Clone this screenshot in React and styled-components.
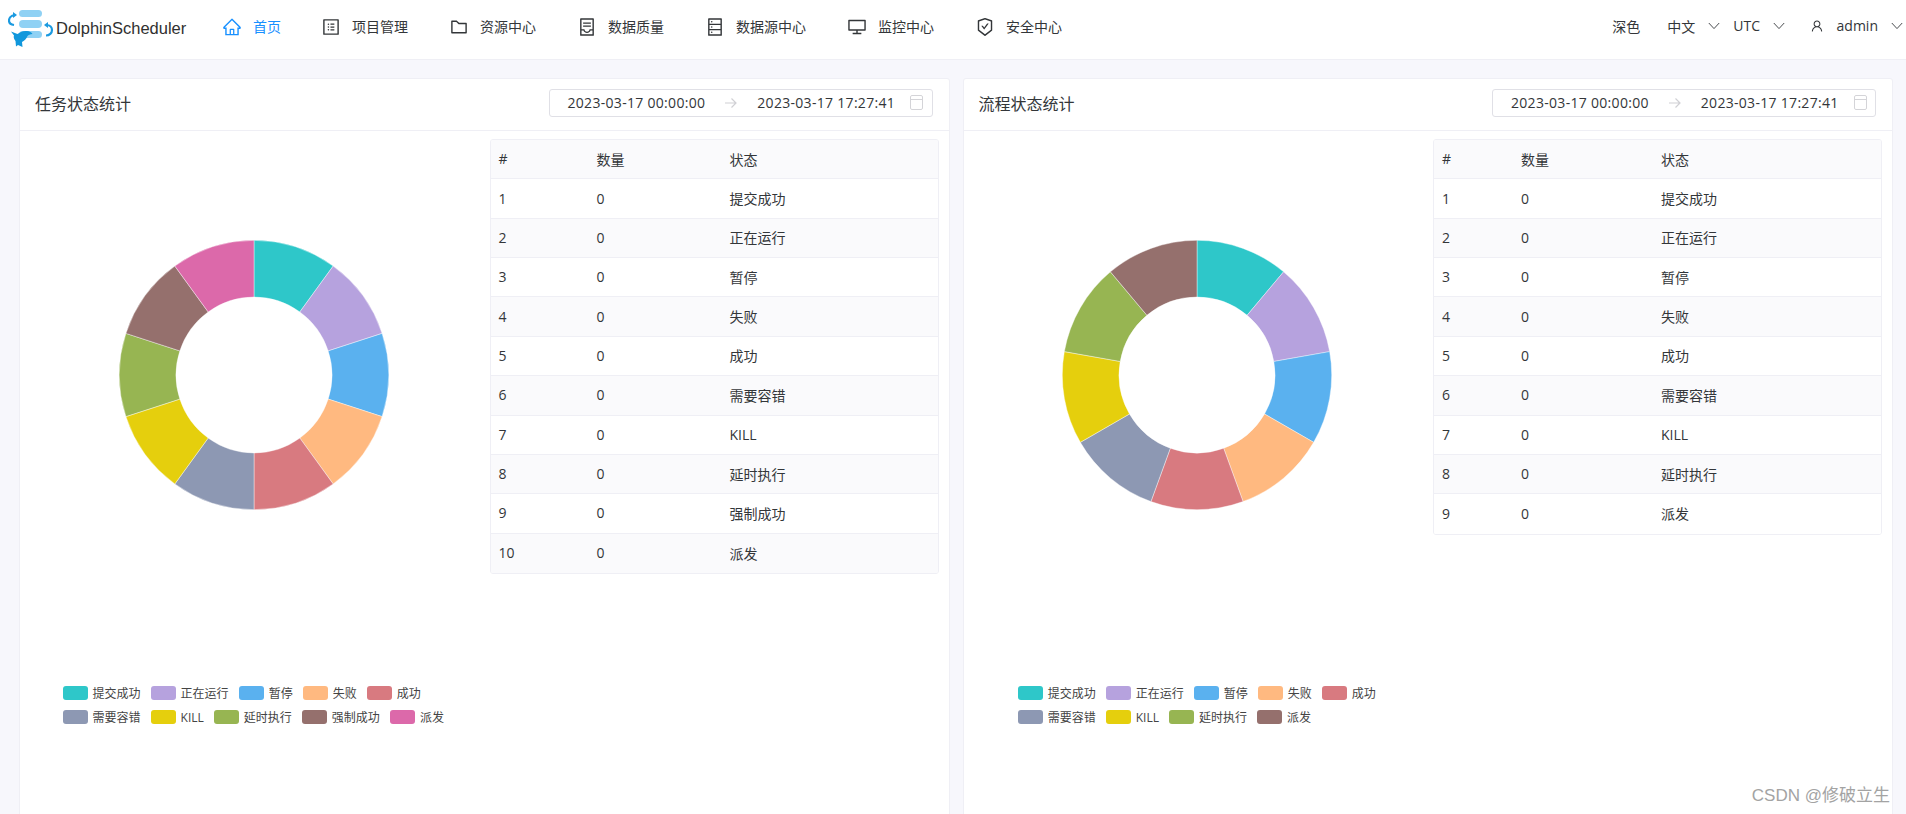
import styled, { createGlobalStyle } from "styled-components";
import {
  AiOutlineHome,
  AiOutlineProfile,
  AiOutlineFolder,
  AiOutlineContainer,
  AiOutlineDatabase,
  AiOutlineDesktop,
  AiOutlineSafetyCertificate,
  AiOutlineUser,
} from "react-icons/ai";

const FONT = `"Open Sans", "Noto Sans CJK SC", sans-serif`;

const menus = [
  { label: "首页", icon: AiOutlineHome, active: true },
  { label: "项目管理", icon: AiOutlineProfile },
  { label: "资源中心", icon: AiOutlineFolder },
  { label: "数据质量", icon: AiOutlineContainer },
  { label: "数据源中心", icon: AiOutlineDatabase },
  { label: "监控中心", icon: AiOutlineDesktop },
  { label: "安全中心", icon: AiOutlineSafetyCertificate },
];

const states = [
  { name: "提交成功", color: "#2ec7c9" },
  { name: "正在运行", color: "#b6a2de" },
  { name: "暂停", color: "#5ab1ef" },
  { name: "失败", color: "#ffb980" },
  { name: "成功", color: "#d87a80" },
  { name: "需要容错", color: "#8d98b3" },
  { name: "KILL", color: "#e5cf0d" },
  { name: "延时执行", color: "#97b552" },
  { name: "强制成功", color: "#95706d" },
  { name: "派发", color: "#dc69aa" },
];

const taskStates = states;
const processStates = states
  .filter((s) => s.name !== "强制成功")
  .map((s) => (s.name === "派发" ? { ...s, color: "#95706d" } : s));

const slicePath = (i, total, cx, cy, r, inner) => {
  const a0 = (i / total) * Math.PI * 2;
  const a1 = ((i + 1) / total) * Math.PI * 2;
  const pt = (rad, a) => `${cx + rad * Math.sin(a)} ${cy - rad * Math.cos(a)}`;
  return `M${pt(inner, a0)} L${pt(r, a0)} A${r} ${r} 0 0 1 ${pt(r, a1)} L${pt(inner, a1)} A${inner} ${inner} 0 0 0 ${pt(inner, a0)} Z`;
};

const Donut = ({ data }) => (
  <DonutSvg viewBox="0 0 270 270">
    {data.map((s, i) => (
      <path
        key={s.name}
        d={slicePath(i, data.length, 135, 135, 134.7, 78)}
        fill={s.color}
        stroke="#fff"
        strokeWidth="0.4"
      />
    ))}
  </DonutSvg>
);

const Chevron = () => (
  <ChevronSvg viewBox="0 0 12 8">
    <path d="M0.8 1 L6 6.6 L11.2 1" fill="none" stroke="#4a4d50" strokeWidth="1" />
  </ChevronSvg>
);

const CalendarIcon = () => (
  <svg width="13" height="15" viewBox="0 0 13 15">
    <rect x="0.5" y="0.5" width="12" height="14" rx="1.5" fill="none" stroke="#d4d4d8" />
    <path d="M0.5 4.5 H12.5" stroke="#d4d4d8" />
  </svg>
);

const ArrowIcon = () => (
  <svg width="12" height="12" viewBox="0 0 12 12">
    <path d="M0 6 H11 M6.5 1.5 L11 6 L6.5 10.5" fill="none" stroke="#d0d0d4" strokeWidth="1.2" />
  </svg>
);

const Logo = () => (
  <svg width="46" height="38" viewBox="0 0 46 38">
    <rect x="11" y="0" width="23" height="7" rx="3.5" fill="#8fd1f4" />
    <rect x="11" y="10" width="23" height="8" rx="4" fill="#8fd1f4" />
    <rect x="11" y="21" width="23" height="7" rx="3.5" fill="#8fd1f4" />
    <path d="M7 5 C2.5 5.5 1 8.5 1 10.5 C1 13 3 14.5 6 15" fill="none" stroke="#1b9ae0" strokeWidth="2.2" />
    <path d="M5 2 L9 5 L5 8 Z" fill="#1b9ae0" />
    <path d="M38.5 15 C42 15 44 17.5 44 20 C44 23 41.5 25.5 38 25.5" fill="none" stroke="#1b9ae0" strokeWidth="2.2" />
    <path d="M40 12 L36 15 L40 18 Z" fill="#1b9ae0" />
    <path
      d="M3 21.5 L9.5 24 C12 22.5 14.5 20.5 19 21 C21.5 21.3 23.5 22.3 24.5 24 C22 24.4 20.5 25 19.5 26 C18.5 29 16 31 14 32 L14.5 37 L10 35 L8 36.5 L7.5 31 C5.5 28.5 5.5 26.5 6 25.5 Z"
      fill="#1097dc"
    />
  </svg>
);

const StatCard = ({ title, data, cols }) => (
  <Card>
    <CardHeader>
      <CardTitle>{title}</CardTitle>
      <RangePicker>
        <DateText>2023-03-17 00:00:00</DateText>
        <ArrowIcon />
        <DateText>2023-03-17 17:27:41</DateText>
        <PickerIcon>
          <CalendarIcon />
        </PickerIcon>
      </RangePicker>
    </CardHeader>
    <CardBody>
      <ChartColumn>
        <Donut data={data} />
        <Legend>
          {[data.slice(0, 5), data.slice(5)].map((row, r) => (
            <LegendRow key={r}>
              {row.map((s) => (
                <LegendItem key={s.name}>
                  <Swatch $color={s.color} />
                  {s.name}
                </LegendItem>
              ))}
            </LegendRow>
          ))}
        </Legend>
      </ChartColumn>
      <Table>
        <Row $cols={cols} $head>
          <span>#</span>
          <span>数量</span>
          <span>状态</span>
        </Row>
        {data.map((s, i) => (
          <Row key={s.name} $cols={cols} $striped={i % 2 === 1}>
            <span>{i + 1}</span>
            <span>0</span>
            <span>{s.name}</span>
          </Row>
        ))}
      </Table>
    </CardBody>
  </Card>
);

export default function App() {
  return (
    <>
      <GlobalStyle />
      <Page>
        <Header>
          <Brand>
            <Logo />
            <BrandName>DolphinScheduler</BrandName>
          </Brand>
          <Nav>
            {menus.map((m) => (
              <NavItem key={m.label} $active={m.active}>
                <m.icon size={20} />
                {m.label}
              </NavItem>
            ))}
          </Nav>
          <Actions>
            <Action>深色</Action>
            <Action $gap={27}>
              中文
              <Chevron />
            </Action>
            <Action $gap={13}>
              UTC
              <Chevron />
            </Action>
            <Action $gap={24.5}>
              <AiOutlineUser size={14} />
              admin
              <Chevron />
            </Action>
          </Actions>
        </Header>
        <Main>
          <StatCard title="任务状态统计" data={taskStates} cols="98px 133px 1fr" />
          <StatCard title="流程状态统计" data={processStates} cols="79px 140px 1fr" />
        </Main>
        <Watermark>CSDN @修破立生</Watermark>
      </Page>
    </>
  );
}

const GlobalStyle = createGlobalStyle`
  html, body {
    margin: 0;
    height: 100%;
    overflow: hidden;
  }
  body {
    font-family: ${FONT};
    font-size: 14px;
    color: #333639;
    background: #f7f7fc;
  }
`;

const Page = styled.div`
  position: relative;
  height: 100vh;
  display: flex;
  flex-direction: column;
  overflow: hidden;
`;

const Header = styled.header`
  flex: none;
  height: 60px;
  box-sizing: border-box;
  display: flex;
  align-items: center;
  padding-right: 3px;
  background: #fff;
  border-bottom: 1px solid #efeff5;
`;

const Brand = styled.div`
  flex: none;
  width: 202px;
  display: flex;
  align-items: center;
  gap: 2px;
  padding-left: 8px;
  margin-bottom: 2px;
  box-sizing: border-box;
`;

const BrandName = styled.span`
  font-family: "Liberation Sans", Arial, sans-serif;
  font-size: 16.5px;
  color: #303030;
`;

const Nav = styled.nav`
  display: flex;
  align-items: center;
  margin-bottom: 8px;
`;

const NavItem = styled.div`
  display: flex;
  align-items: center;
  gap: 11px;
  padding: 0 21px 0 20px;
  color: ${(p) => (p.$active ? "#1890ff" : "#333639")};

  &:first-child {
    padding-right: 20px;
  }

  svg {
    margin-top: 3px;
  }
`;

const Actions = styled.div`
  margin-left: auto;
  margin-bottom: 8px;
  display: flex;
  align-items: center;
`;

const Action = styled.div`
  display: flex;
  align-items: center;
  gap: 13px;
  margin-left: ${(p) => p.$gap || 0}px;
`;

const ChevronSvg = styled.svg`
  width: 12px;
  height: 8px;
`;

const Main = styled.main`
  flex: 1;
  display: flex;
  gap: 13px;
  padding: 18px 13px 0 19px;
  min-height: 0;
`;

const Card = styled.section`
  flex: 1 1 0;
  min-width: 0;
  height: 780px;
  box-sizing: border-box;
  background: #fff;
  border: 1px solid #efeff5;
  border-radius: 3px;
`;

const CardHeader = styled.div`
  height: 52px;
  box-sizing: border-box;
  display: flex;
  align-items: center;
  justify-content: space-between;
  padding: 0 16px 4px 15px;
  border-bottom: 1px solid #efeff5;
`;

const CardTitle = styled.h2`
  margin: 0;
  font-size: 16px;
  font-weight: 400;
  color: #333639;
`;

const RangePicker = styled.div`
  width: 384px;
  height: 28px;
  box-sizing: border-box;
  display: flex;
  align-items: center;
  gap: 20px;
  padding: 0 8px 0 18px;
  border: 1px solid #e0e0e6;
  border-radius: 3px;
  font-size: 14px;

  svg {
    flex: none;
  }
`;

const DateText = styled.span`
  flex: none;
  white-space: nowrap;
  letter-spacing: 0.3px;
`;

const PickerIcon = styled.span`
  margin-left: -5px;
  display: flex;
`;

const CardBody = styled.div`
  display: flex;
  align-items: flex-start;
  padding-right: 10px;
`;

const ChartColumn = styled.div`
  flex: 1;
  min-width: 0;
  display: flex;
  flex-direction: column;
  align-items: center;
  padding: 109px 2px 0 0;
`;

const DonutSvg = styled.svg`
  display: block;
  width: 270px;
  height: 270px;
`;

const Legend = styled.div`
  margin-top: 176px;
  margin-right: 1px;
  display: flex;
  flex-direction: column;
  gap: 10px;
  font-size: 12px;
  color: #444;
`;

const LegendRow = styled.div`
  display: flex;
  gap: 10px;
`;

const LegendItem = styled.div`
  display: flex;
  align-items: center;
  gap: 5px;
  height: 14px;
`;

const Swatch = styled.i`
  width: 25px;
  height: 14px;
  border-radius: 3px;
  background: ${(p) => p.$color};
`;

const Table = styled.div`
  flex: none;
  width: 449px;
  margin-top: 8px;
  box-sizing: border-box;
  border: 1px solid #efeff5;
  border-radius: 3px;
  overflow: hidden;
`;

const Row = styled.div`
  display: grid;
  grid-template-columns: ${(p) => p.$cols};
  align-items: center;
  height: 39.36px;
  box-sizing: border-box;
  padding: 0 0 1px 8px;
  background: ${(p) => (p.$head || p.$striped ? "#fafafc" : "#fff")};
  border-bottom: 1px solid #efeff5;

  &:last-child {
    border-bottom: none;
  }
`;

const Watermark = styled.div`
  position: absolute;
  right: 16px;
  bottom: 8px;
  font-family: "Liberation Sans", "Noto Sans CJK SC", sans-serif;
  font-size: 17px;
  color: #a3a3a3;
`;
